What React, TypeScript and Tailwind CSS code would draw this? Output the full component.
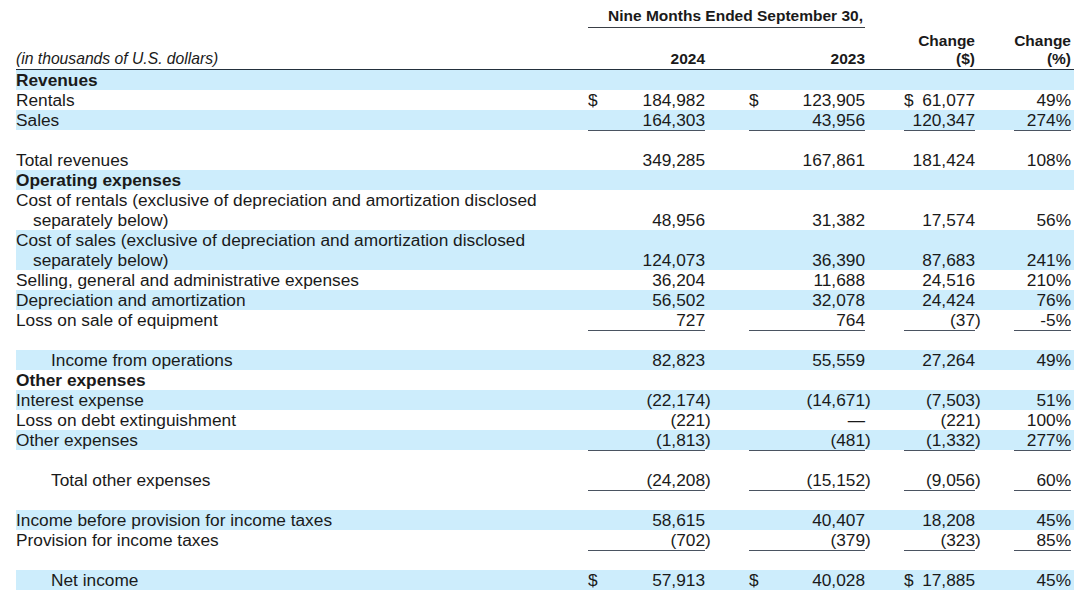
import React from "react";

type Line = {
  label?: string;
  kind: "section" | "item" | "total" | "spacer";
  blue?: boolean;
  dollar?: boolean;
  line?: boolean;
  v?: [string, string, string, string];
};

const grid = "grid grid-cols-[572px_117px_44px_116px_39px_71px_39px_57px] w-[1058px]";

const rows: Line[] = [
  { label: "Revenues", kind: "section", blue: true },
  { label: "Rentals", kind: "item", dollar: true, v: ["184,982", "123,905", "61,077", "49%"] },
  { label: "Sales", kind: "item", blue: true, line: true, v: ["164,303", "43,956", "120,347", "274%"] },
  { kind: "spacer" },
  { label: "Total revenues", kind: "item", v: ["349,285", "167,861", "181,424", "108%"] },
  { label: "Operating expenses", kind: "section", blue: true },
  {
    label: "Cost of rentals (exclusive of depreciation and amortization disclosed separately below)",
    kind: "item",
    v: ["48,956", "31,382", "17,574", "56%"],
  },
  {
    label: "Cost of sales (exclusive of depreciation and amortization disclosed separately below)",
    kind: "item",
    blue: true,
    v: ["124,073", "36,390", "87,683", "241%"],
  },
  { label: "Selling, general and administrative expenses", kind: "item", v: ["36,204", "11,688", "24,516", "210%"] },
  { label: "Depreciation and amortization", kind: "item", blue: true, v: ["56,502", "32,078", "24,424", "76%"] },
  { label: "Loss on sale of equipment", kind: "item", line: true, v: ["727", "764", "(37)", "-5%"] },
  { kind: "spacer" },
  { label: "Income from operations", kind: "total", blue: true, v: ["82,823", "55,559", "27,264", "49%"] },
  { label: "Other expenses", kind: "section" },
  { label: "Interest expense", kind: "item", blue: true, v: ["(22,174)", "(14,671)", "(7,503)", "51%"] },
  { label: "Loss on debt extinguishment", kind: "item", v: ["(221)", "—", "(221)", "100%"] },
  { label: "Other expenses", kind: "item", blue: true, line: true, v: ["(1,813)", "(481)", "(1,332)", "277%"] },
  { kind: "spacer" },
  { label: "Total other expenses", kind: "total", line: true, v: ["(24,208)", "(15,152)", "(9,056)", "60%"] },
  { kind: "spacer" },
  { label: "Income before provision for income taxes", kind: "item", blue: true, v: ["58,615", "40,407", "18,208", "45%"] },
  { label: "Provision for income taxes", kind: "item", line: true, v: ["(702)", "(379)", "(323)", "85%"] },
  { kind: "spacer" },
  { label: "Net income", kind: "total", blue: true, dollar: true, v: ["57,913", "40,028", "17,885", "45%"] },
];

const Num = ({ value, dollar, line }: { value: string; dollar?: boolean; line?: boolean }) => {
  // closing paren hangs outside the column, in the gap cell
  const main = value.endsWith(")") ? value.slice(0, -1) : value;
  return (
    <div className={`flex h-5 ${line ? "shadow-[0_1px_0_#4a5361]" : ""}`}>
      {dollar && <span>$</span>}
      <span className="ml-auto">{main}</span>
    </div>
  );
};

const Paren = ({ value }: { value?: string }) => (
  <div className="h-5">{value && value.endsWith(")") ? ")" : ""}</div>
);

const Row = ({ r }: { r: Line }) => {
  if (r.kind === "spacer") return <div className="h-5" />;
  const bg = r.blue ? "bg-[#cdedfc]" : "";
  let label = "";
  if (r.kind === "section") label = "font-bold";
  if (r.kind === "item") label = "pl-[17px] -indent-[17px]";
  if (r.kind === "total") label = "pl-[35px]";
  const v = r.v;
  return (
    <div className={`${grid} items-end leading-5 ${bg}`}>
      <div className={label}>{r.label}</div>
      {v ? (
        <>
          <Num value={v[0]} dollar={r.dollar} line={r.line} />
          <Paren value={v[0]} />
          <Num value={v[1]} dollar={r.dollar} line={r.line} />
          <Paren value={v[1]} />
          <Num value={v[2]} dollar={r.dollar} line={r.line} />
          <Paren value={v[2]} />
          <Num value={v[3]} line={r.line} />
        </>
      ) : null}
    </div>
  );
};

export default function App() {
  return (
    <div className="min-h-[600px] bg-white pl-4 text-[17.3px] text-[#1a1a1a] font-['Liberation_Sans',Arial,sans-serif]">
      {/* column headings */}
      <div className={`${grid} h-[28px] items-end text-[15.5px] font-bold leading-[18px]`}>
        <div />
        <div className="col-span-3 border-b border-[#3a3f46] pb-[2px] pl-[18px] text-center">
          Nine Months Ended September 30,
        </div>
      </div>
      <div className={`${grid} h-[42px] items-end border-b border-[#23303d] pb-[1px] text-[15.5px] leading-[18px]`}>
        <div className="italic text-[15.7px]">(in thousands of U.S. dollars)</div>
        <div className="text-right font-bold">2024</div>
        <div />
        <div className="text-right font-bold">2023</div>
        <div />
        <div className="text-right font-bold">
          Change
          <br />
          ($)
        </div>
        <div />
        <div className="text-right font-bold">
          Change
          <br />
          (%)
        </div>
      </div>
      {rows.map((r, i) => (
        <Row key={i} r={r} />
      ))}
    </div>
  );
}
